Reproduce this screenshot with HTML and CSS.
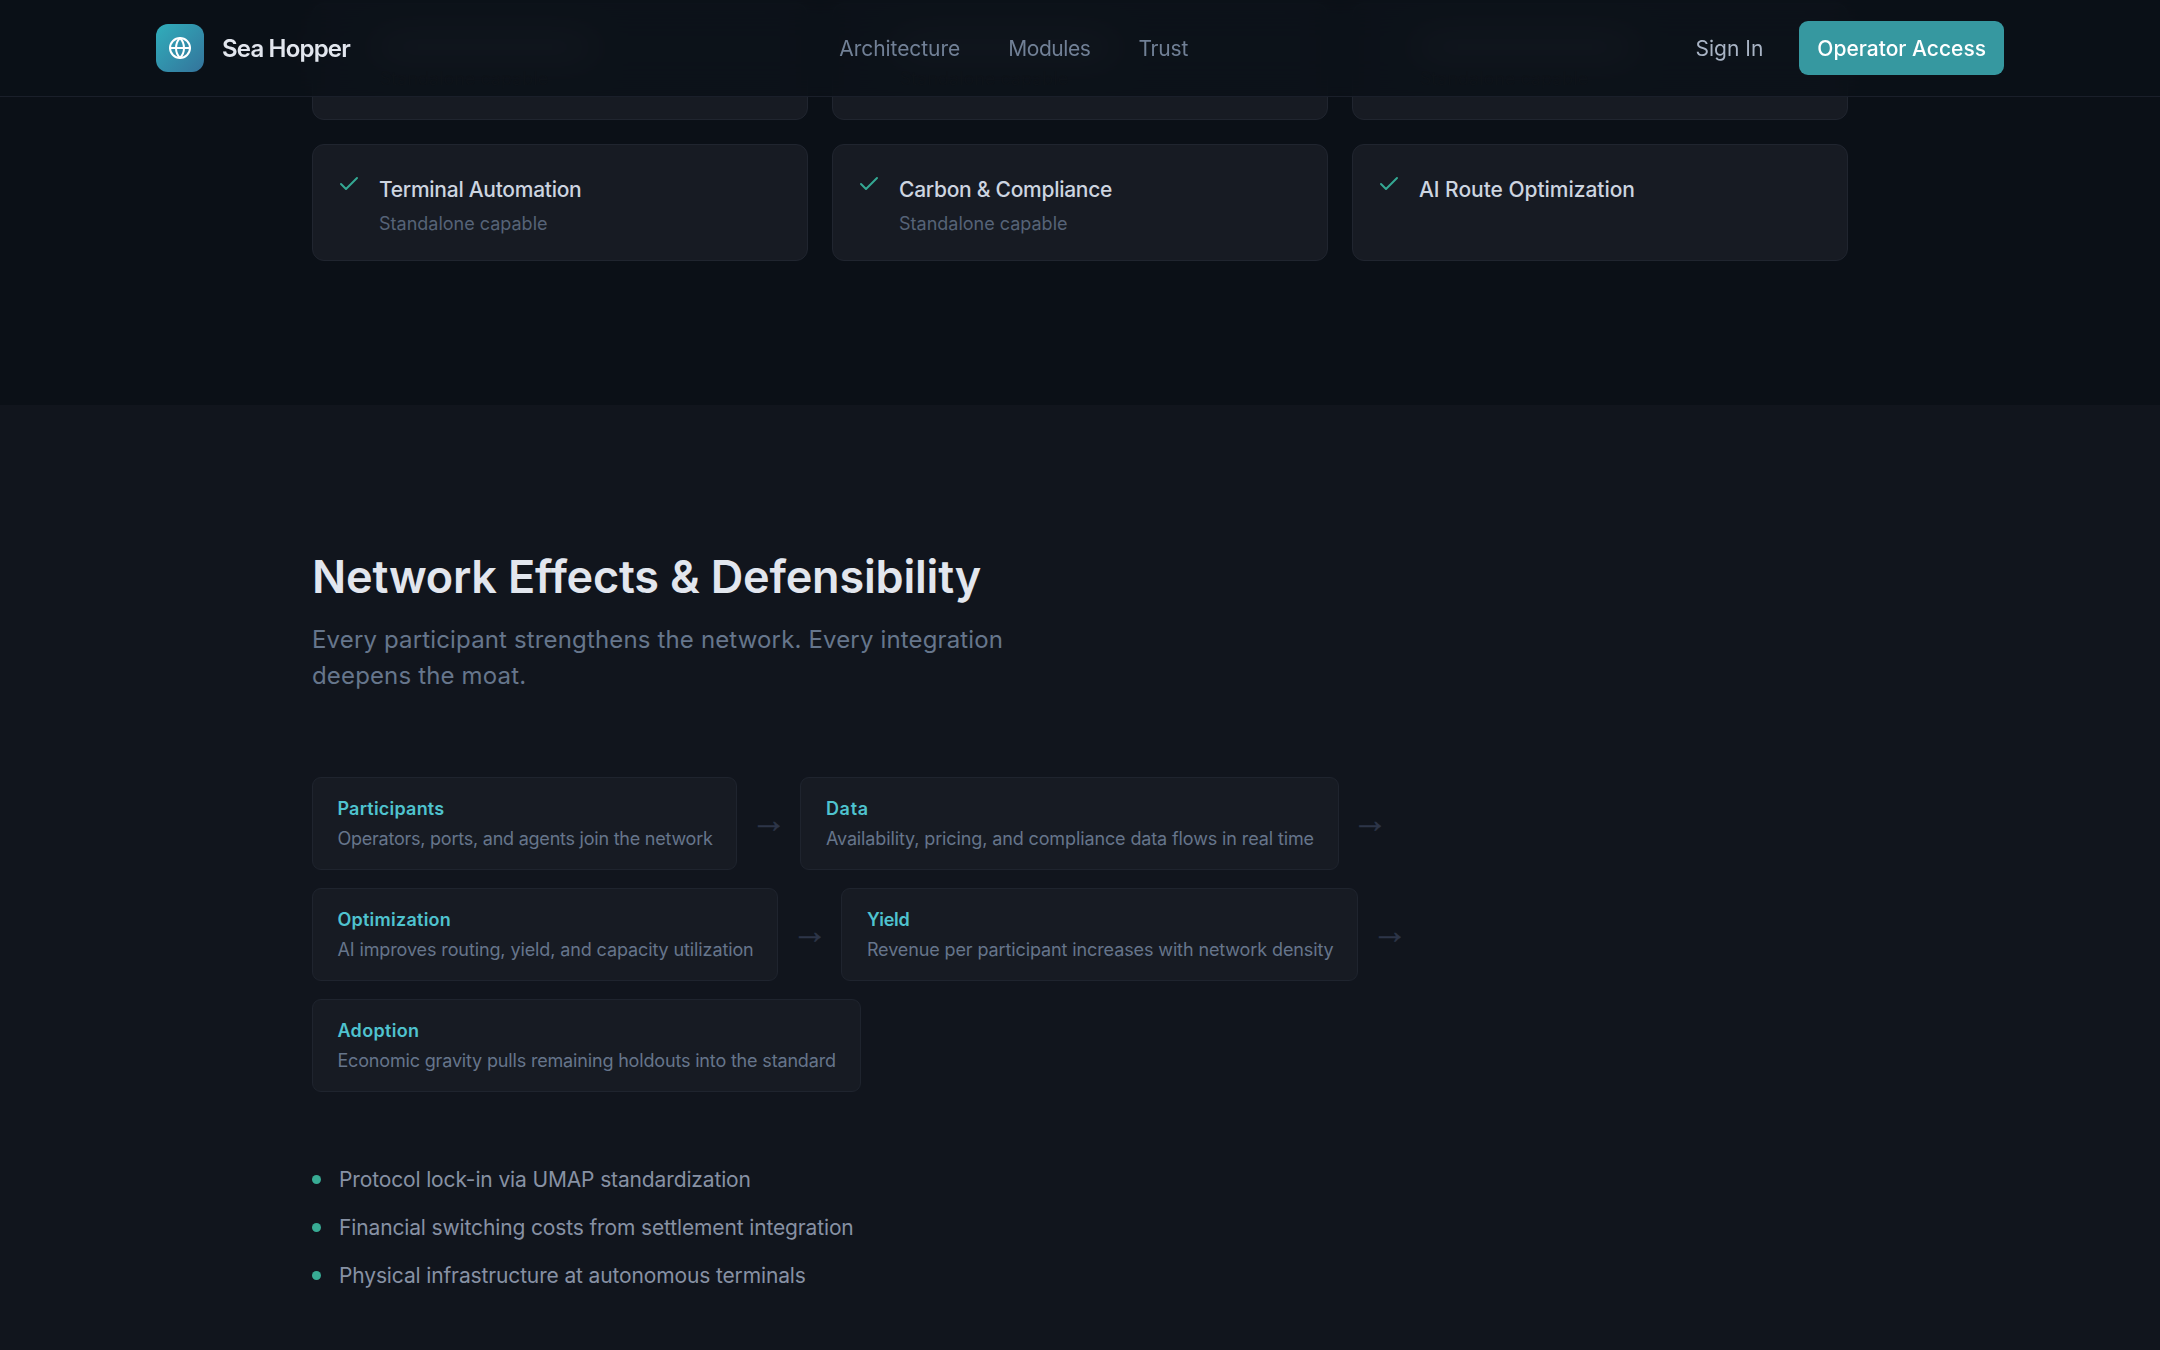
FILE: index.html
```html
<!DOCTYPE html>
<html lang="en">
<head>
<meta charset="utf-8">
<title>Sea Hopper</title>
<link rel="stylesheet" href="styles.css">
</head>
<body>
<svg class="defs" aria-hidden="true"><symbol id="check" viewBox="0 0 24 24"><path d="M20 6 9 17l-5-5"/></symbol></svg>
<header class="header">
  <div class="header-inner">
    <div class="brand">
      <span class="logo"><svg viewBox="0 0 24 24"><circle cx="12" cy="12" r="10"/><path d="M12 2a14.5 14.5 0 0 0 0 20 14.5 14.5 0 0 0 0-20"/><path d="M2 12h20"/></svg></span>
      <span class="brand-name">Sea Hopper</span>
    </div>
    <nav class="nav"><a>Architecture</a><a class="modules-link">Modules</a><a class="trust-link">Trust</a></nav>
    <div class="actions"><a class="sign-in">Sign In</a><a class="button">Operator Access</a></div>
  </div>
</header>
<main>
  <section class="modules">
    <div class="grid">
      <article class="module covered"><div><div class="bar"></div><p>Standalone capable</p></div></article>
      <article class="module covered"><div><div class="bar"></div><p>Standalone capable</p></div></article>
      <article class="module covered"><div><div class="bar"></div><p>Standalone capable</p></div></article>
      <article class="module terminal"><svg class="check"><use href="#check"/></svg><div><h3>Terminal Automation</h3><p>Standalone capable</p></div></article>
      <article class="module carbon"><svg class="check"><use href="#check"/></svg><div><h3>Carbon &amp; Compliance</h3><p>Standalone capable</p></div></article>
      <article class="module"><svg class="check"><use href="#check"/></svg><div><h3>AI Route Optimization</h3></div></article>
    </div>
  </section>
  <section class="network">
    <div class="container">
      <h2>Network Effects &amp; Defensibility</h2>
      <p class="lead">Every participant strengthens the network. Every integration deepens the moat.</p>
      <div class="flow">
        <div class="step participants"><div class="node"><h4>Participants</h4><p>Operators, ports, and agents join the network</p></div><span class="arrow">→</span></div>
        <div class="step data"><div class="node"><h4>Data</h4><p>Availability, pricing, and compliance data flows in real time</p></div><span class="arrow">→</span></div>
        <div class="step optimization"><div class="node"><h4>Optimization</h4><p>AI improves routing, yield, and capacity utilization</p></div><span class="arrow">→</span></div>
        <div class="step yield"><div class="node"><h4>Yield</h4><p>Revenue per participant increases with network density</p></div><span class="arrow">→</span></div>
        <div class="step adoption"><div class="node"><h4>Adoption</h4><p>Economic gravity pulls remaining holdouts into the standard</p></div></div>
      </div>
      <ul class="moats">
        <li>Protocol lock-in via UMAP standardization</li>
        <li>Financial switching costs from settlement integration</li>
        <li>Physical infrastructure at autonomous terminals</li>
      </ul>
    </div>
  </section>
</main>
</body>
</html>
```
FILE: styles.css
```css
:root { zoom: 1.5; }
* { box-sizing: border-box; margin: 0; padding: 0; }
body {
  height: 900px;
  overflow: hidden;
  background: #0b1017;
  color: #e2e6ee;
  font-family: Inter, "Liberation Sans", sans-serif;
  line-height: 1.5;
}
.defs { position: absolute; width: 0; height: 0; }
svg { fill: none; stroke: currentColor; stroke-linecap: round; stroke-linejoin: round; }

.header {
  position: fixed;
  inset: 0 0 auto;
  z-index: 10;
  border-bottom: 1px solid #1a1f2a;
  background: rgba(11, 16, 23, 0.85);
  backdrop-filter: blur(12px);
}
.header-inner {
  display: flex;
  align-items: center;
  justify-content: space-between;
  max-width: 1280px;
  height: 64px;
  margin: 0 auto;
  padding: 0 24px;
  font-size: 14px;
}
.brand { display: flex; align-items: center; gap: 12px; }
.logo {
  display: grid;
  place-items: center;
  width: 32px;
  height: 32px;
  border-radius: 8px;
  background: linear-gradient(135deg, #30aebb, #34739b);
  color: #fff;
}
.logo svg { width: 16px; height: 16px; stroke-width: 2; }
.brand-name { padding-top: 1.4px; font-size: 16px; font-weight: 600; letter-spacing: -0.034em; }
.nav { display: flex; gap: 32px; padding-top: 1.4px; color: #718096; letter-spacing: -0.003em; }
.modules-link { letter-spacing: -0.02em; }
.trust-link { letter-spacing: -0.01em; }
.actions { display: flex; align-items: center; gap: 12px; }
.sign-in { padding: 1.4px 12px 0; color: #a8b3c4; }
.button {
  display: flex;
  align-items: center;
  height: 36px;
  padding: 1.4px 12px 0;
  border-radius: 6px;
  background: #3698a0;
  color: #fff;
  font-weight: 500;
}

.modules { height: 270px; padding-top: 2px; }
.grid {
  display: grid;
  grid-template-columns: repeat(3, 1fr);
  gap: 16px;
  width: 1024px;
  margin: 0 auto;
}
.module {
  display: flex;
  gap: 12px;
  height: 78px;
  padding: 16px;
  border: 1px solid #20252f;
  border-radius: 8px;
  background: #171b23;
}
.check { flex: none; width: 16px; height: 16px; margin-top: 2px; color: #34a893; stroke-width: 2; }
.module h3 { padding-top: 2.5px; color: #cdd5e0; font-size: 14px; font-weight: 500; line-height: 22px; letter-spacing: -0.0015em; }
.terminal h3, .carbon h3 { letter-spacing: -0.013em; }
.module p { margin-top: 2.5px; color: #566377; font-size: 12px; line-height: 18px; }

.covered { padding-left: 44.5px; }
.covered .bar { width: 140px; height: 11px; margin: 7px 0 6.5px; background: #4c525c; }
.covered p { position: relative; z-index: 11; color: #0e1319; }

.network { height: 630px; padding-top: 96.67px; background: #11151d; }
.container { width: 1024px; margin: 0 auto; }
h2 { font-size: 30px; font-weight: 600; line-height: 36px; letter-spacing: -0.0044em; }
.lead { width: 500px; margin-top: 12px; font-size: 16px; line-height: 24px; letter-spacing: 0.0063em; color: #66768c; }
.flow { display: flex; flex-wrap: wrap; gap: 12px; width: 768px; margin-top: 55.33px; }
.step { display: flex; align-items: center; gap: 12px; }
.node {
  height: 62px;
  padding: 11.4px 15.9px 12px 16.3px;
  border: 1px solid #1f242e;
  border-radius: 6px;
  background: #171b23;
  font-size: 12px;
  line-height: 18px;
}
.node h4 { font-size: 12px; font-weight: 600; color: #4fc3cf; }
.node p { margin-top: 2px; color: #66758b; }
.participants h4 { letter-spacing: 0.012em; }
.participants p { letter-spacing: -0.0129em; }
.data h4 { letter-spacing: 0.04em; }
.data p { letter-spacing: -0.0067em; }
.optimization h4 { letter-spacing: 0.014em; }
.optimization p { letter-spacing: -0.0062em; }
.yield h4 { letter-spacing: -0.011em; }
.yield p { letter-spacing: -0.0062em; }
.adoption h4 { letter-spacing: 0.018em; }
.adoption p { letter-spacing: -0.0093em; }
.arrow {
  margin: 0 -3px;
  padding-bottom: 5.3px;
  font-family: "Liberation Sans", sans-serif;
  font-size: 24px;
  line-height: 18px;
  color: #2d3548;
  -webkit-text-stroke: 0.35px #2d3548;
}
.moats { display: grid; gap: 11px; margin-top: 48px; list-style: none; font-size: 14px; line-height: 21px; letter-spacing: -0.0065em; color: #8791a4; }
.moats li { display: flex; align-items: center; gap: 12px; }
.moats li::before { content: ""; width: 6px; height: 6px; border-radius: 50%; background: #38ab94; }
```
